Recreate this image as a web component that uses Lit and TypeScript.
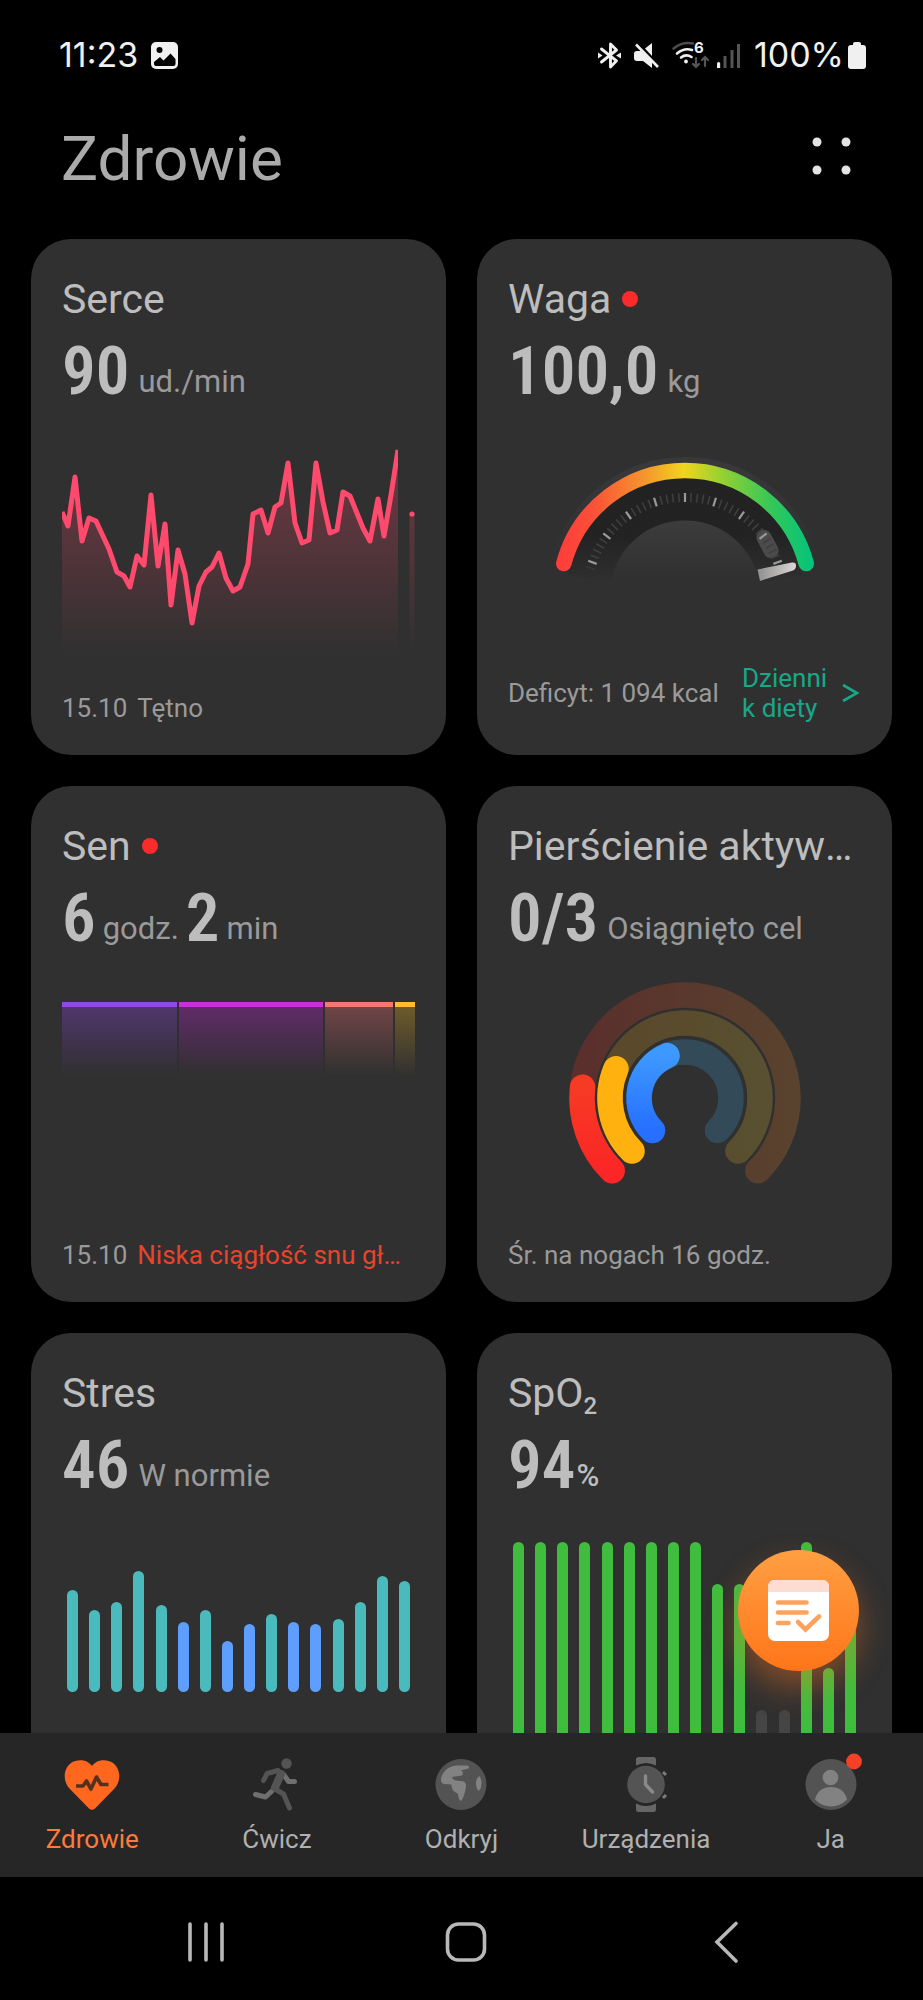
import { LitElement, html, css, svg } from "lit";
import { customElement, property } from "lit/decorators.js";

/** Point on a circle; the angle is in degrees, clockwise from the top. */
function polar(cx: number, cy: number, r: number, deg: number): string {
  const a = (deg * Math.PI) / 180;
  return `${(cx + r * Math.sin(a)).toFixed(2)} ${(cy - r * Math.cos(a)).toFixed(2)}`;
}

function arc(cx: number, cy: number, r: number, from: number, to: number): string {
  const large = to - from > 180 ? 1 : 0;
  return `M${polar(cx, cy, r, from)}A${r} ${r} 0 ${large} 1 ${polar(cx, cy, r, to)}`;
}

@customElement("health-card")
class HealthCard extends LitElement {
  @property() heading = "";
  @property({ type: Boolean }) alert = false;

  static styles = css`
    :host {
      display: flex;
      flex-direction: column;
      box-sizing: border-box;
      min-width: 0;
      min-height: 516px;
      padding: 36px 31px 32px;
      border-radius: 40px;
      background: #303030;
      color: #bdbdbd;
    }
    .title {
      display: flex;
      align-items: center;
      gap: 11px;
      margin: 0 0 12px;
      font-size: 41px;
      line-height: 48px;
      font-weight: 400;
    }
    .label {
      min-width: 0;
      overflow: hidden;
      white-space: nowrap;
      text-overflow: ellipsis;
    }
    .dot {
      flex: none;
      width: 16px;
      height: 16px;
      border-radius: 50%;
      background: #fb2b2b;
    }
    .chart {
      flex: 1;
    }
    .foot {
      display: flex;
      align-items: center;
      color: #9a9a9a;
      font-size: 26px;
      line-height: 30px;
    }
  `;

  render() {
    return html`
      <h2 class="title">
        <span class="label"><slot name="title">${this.heading}</slot></span>
        ${this.alert ? html`<span class="dot"></span>` : ""}
      </h2>
      <slot name="value"></slot>
      <div class="chart"><slot></slot></div>
      <div class="foot"><slot name="foot"></slot></div>
    `;
  }
}

@customElement("bar-chart")
class BarChart extends LitElement {
  @property({ attribute: false }) bars: { h: number; c: string }[] = [];

  static styles = css`
    :host {
      display: flex;
      justify-content: space-between;
      align-items: flex-end;
      padding: 0 5px;
    }
    .bar {
      width: 11px;
      border-radius: 6px;
    }
    .teal {
      background: #4bbabd;
    }
    .blue {
      background: #5e9eff;
    }
    .green {
      background: #40bd3f;
    }
    .grey {
      background: #454545;
    }
  `;

  render() {
    return this.bars.map((b) => html`<span class="bar ${b.c}" style="height:${b.h}px"></span>`);
  }
}

const heartLine =
  "0,106 6,120 13,71 20,135 27,112 34,115 47,143 55,166 62,170 68,181 75,150 82,159 89,89 96,160 103,118 109,199 116,144 123,168 130,217 137,180 144,166 150,161 157,147 164,172 171,185 178,181 186,158 191,108 199,104 206,127 213,101 219,97 226,57 233,117 240,137 247,134 254,57 261,96 268,127 275,124 281,86 288,90 301,122 308,135 316,93 322,130 329,89 336,44";

const sleep = [
  { size: 116, c: "deep" },
  { size: 144, c: "light" },
  { size: 69, c: "rem" },
  { size: 20, c: "awake" },
];

const stress = [102, 82, 90, 121, 87, 70, 82, 51, 68, 78, 70, 68, 73, 90, 116, 111].map((h) => ({
  h,
  c: h > 70 ? "teal" : "blue",
}));

const oxygen = [210, 210, 210, 210, 210, 210, 210, 210, 210, 168, 168, 42, 42, 210, 84, 126].map((h) => ({
  h,
  c: h > 42 ? "green" : "grey",
}));

const gaugeTicks = Array.from({ length: 43 }, (_, i) => i - 21);

const rings = [
  { r: 103, end: -84, track: "url(#track-red)", fill: "url(#ring-red)" },
  { r: 75, end: -67, track: "url(#track-amber)", fill: "#ffb20f" },
  { r: 46, end: -23, track: "#334a59", fill: "url(#ring-blue)" },
];

const tabs = [
  {
    name: "Zdrowie",
    active: true,
    icon: svg`<path fill="#ff671f" d="M30 11C25 4 15 4 9 8C1 14 1 26 7 33L27 53.500Q30 56 33 53.500L53 33C59 26 59 14 51 8C45 4 35 4 30 11z"/>
      <path fill="none" stroke="#54301f" stroke-width="3.600" stroke-linejoin="round" d="M14 31H21L24.500 26L29 34L34.500 22L39 29.500H46.500"/>`,
  },
  {
    name: "Ćwicz",
    icon: svg`<g fill="none" stroke-linecap="round" stroke-linejoin="round">
      <path stroke="#6f6f6f" stroke-width="5" d="M37 20L41.500 26.500H47.500M25 36L18.500 42L8.500 39.500"/>
      <path stroke="#545454" stroke-width="5" d="M16.500 25.500L20 18.500L31 15.500M28 34L36.500 39L42.500 53"/>
      <path stroke="#545454" stroke-width="8" d="M34 19L28 32.500"/></g>
      <circle cx="39.500" cy="8.500" r="5.200" fill="#545454"/>`,
  },
  {
    name: "Odkryj",
    icon: svg`<circle cx="30" cy="29.500" r="25.500" fill="#535353"/>
      <path fill="#828282" d="M10 25Q10 20 14 16Q18 11 26 10.500H36Q39 11 37.500 13.500L30 15.500Q33 17 31 20.500L21 22Q22 25 25 25.500L33 26.500Q35.500 28 35 32L34 37Q32 44 30 46Q27.500 45 27 39L22.500 36Q20 32 20.500 29.500L13 29Q10 28 10 25z"/>
      <path fill="#828282" d="M48.500 21Q44.500 24 45 29Q45 34 48 36Q50.500 33 50.500 28.500Q50.500 24 48.500 21z"/>`,
  },
  {
    name: "Urządzenia",
    icon: svg`<path fill="#666" d="M20 10.500V4.500Q20 2 22.500 2H37.500Q40 2 40 4.500V10.500Q30 5.500 20 10.500zM20 48.500V54Q20 57 22.500 57H37.500Q40 57 40 54V48.500Q30 53.500 20 48.500z"/>
      <circle cx="30" cy="29.500" r="18.800" fill="#545454"/>
      <path fill="none" stroke="#8a8a8a" stroke-width="3.400" stroke-linecap="round" stroke-linejoin="round" d="M29.500 21V29.500L36.500 37"/>
      <path stroke="#7a7a7a" stroke-width="3" d="M47 17L50 20M47 43L50 40"/>`,
  },
  {
    name: "Ja",
    icon: svg`<circle cx="30" cy="29.500" r="25.500" fill="#535353"/>
      <circle cx="29.500" cy="22.500" r="7.800" fill="#828282"/>
      <path fill="#828282" d="M14 44.500C16 36 22 32 30 32S44 36 46 44.500Q39 51.500 30 51.500T14 44.500z"/>
      <circle cx="53" cy="6.500" r="7.900" fill="#f24125"/>`,
  },
];

@customElement("app-root")
class AppRoot extends LitElement {
  static styles = css`
    :host {
      display: flex;
      flex-direction: column;
      height: 100vh;
      overflow: hidden;
      background: #000;
      color: #bdbdbd;
      font-family: Roboto, "Noto Sans", sans-serif;
    }
    svg {
      display: block;
      flex: none;
      overflow: visible;
    }
    button {
      padding: 0;
      border: 0;
      background: none;
      color: inherit;
      font: inherit;
      cursor: pointer;
    }
    .status {
      display: flex;
      align-items: center;
      justify-content: space-between;
      height: 110px;
      padding: 0 57px 0 59px;
      flex: none;
      color: #f0f0f0;
      font-family: Inter, Roboto, sans-serif;
      font-size: 34px;
      line-height: 40px;
    }
    .group {
      display: flex;
      align-items: center;
      gap: 13px;
    }
    .net,
    .power {
      display: flex;
      align-items: center;
    }
    .net {
      gap: 9px;
    }
    .power {
      gap: 4px;
    }
    .header {
      display: flex;
      align-items: center;
      justify-content: space-between;
      flex: none;
      padding: 13px 66px 44px 61px;
    }
    .header h1 {
      margin: 0;
      font-size: 62px;
      line-height: 72px;
      font-weight: 400;
      color: #ababab;
    }
    .body {
      position: relative;
      display: flex;
      flex: 1;
      min-height: 0;
    }
    .scroll {
      flex: 1;
      min-width: 0;
      overflow-y: auto;
      scrollbar-width: none;
    }
    .grid {
      display: grid;
      grid-template-columns: repeat(2, minmax(0, 1fr));
      gap: 31px;
      padding: 0 31px 31px;
    }
    .value {
      display: flex;
      align-items: flex-end;
      gap: 9px;
      height: 72px;
      white-space: nowrap;
    }
    .value.duration {
      gap: 7px;
    }
    .value.tight {
      gap: 1px;
    }
    .num {
      font-family: "Roboto Condensed", "Liberation Sans Narrow", Roboto, sans-serif;
      font-size: 67px;
      line-height: 72px;
      font-weight: 600;
    }
    .unit {
      margin-bottom: 7px;
      color: #9a9a9a;
      font-size: 31px;
      line-height: 36px;
    }
    .percent {
      color: #bdbdbd;
      font-weight: 500;
    }
    sub {
      font-size: 24px;
      line-height: 0;
      font-weight: 500;
      vertical-align: -7px;
    }
    .plot {
      width: 100%;
      height: auto;
    }
    .sleep {
      display: flex;
      gap: 2px;
      height: 74px;
      margin-top: 48px;
    }
    .stage {
      flex-basis: 0;
      border-top: 5px solid;
    }
    .deep {
      border-color: #9148e6;
      background: linear-gradient(#50366b, #303030);
    }
    .light {
      border-color: #c930d9;
      background: linear-gradient(#602b68, #303030);
    }
    .rem {
      border-color: #f77673;
      background: linear-gradient(#704546, #303030);
    }
    .awake {
      border-color: #fbbf2b;
      background: linear-gradient(#6e5b2b, #303030);
    }
    .stress {
      margin-top: 70px;
    }
    .oxygen {
      margin-top: 41px;
    }
    .foot {
      display: flex;
      flex: 1;
      align-items: center;
      justify-content: space-between;
      min-width: 0;
      white-space: nowrap;
    }
    .foot.dated {
      justify-content: flex-start;
      gap: 10px;
    }
    .warn {
      min-width: 0;
      margin-right: 8px;
      overflow: hidden;
      text-overflow: ellipsis;
      color: #e9432c;
    }
    .diary {
      display: flex;
      align-items: center;
      gap: 11px;
      color: #16a888;
      text-decoration: none;
    }
    .diary span {
      width: 88px;
      white-space: normal;
      word-break: break-all;
    }
    .fab {
      position: absolute;
      right: 64px;
      bottom: 62px;
      display: flex;
      align-items: center;
      justify-content: center;
      width: 121px;
      height: 121px;
      border-radius: 50%;
      background: linear-gradient(#ff9f43, #ff7519);
      box-shadow: 0 16px 32px rgba(255, 120, 30, 0.4);
    }
    .tabs {
      display: grid;
      grid-template-columns: repeat(5, 1fr);
      flex: none;
      padding: 22px 0;
      background: #262626;
    }
    .tab {
      display: flex;
      flex-direction: column;
      align-items: center;
      gap: 8px;
      color: #b0b0b0;
      font-size: 26px;
      line-height: 32px;
      text-decoration: none;
    }
    .tab.active {
      color: #ff7a3c;
    }
    .system {
      display: flex;
      align-items: center;
      justify-content: center;
      flex: none;
      height: 123px;
      padding: 6px 0 0 8px;
      box-sizing: border-box;
    }
    .system button {
      display: flex;
      justify-content: center;
      width: 260px;
    }
  `;

  private heartPlot() {
    return html`<svg class="plot" viewBox="0 1 353 252" role="img" aria-label="Tętno">
      <defs>
        <linearGradient id="pulse" gradientUnits="userSpaceOnUse" x1="0" y1="60" x2="0" y2="248">
          <stop offset="0" stop-color="#ff4a6e" stop-opacity=".28" />
          <stop offset=".45" stop-color="#ff4a6e" stop-opacity=".17" />
          <stop offset="1" stop-color="#ff4a6e" stop-opacity="0" />
        </linearGradient>
        <clipPath id="span"><path d="M0 0H336V252H0z" /></clipPath>
      </defs>
      <g clip-path="url(#span)">
        <polygon points="0,250 ${heartLine} 336,250" fill="url(#pulse)" />
        <polyline points=${heartLine} fill="none" stroke="#ff4a6e" stroke-width="5" stroke-linejoin="round" />
      </g>
      <path d="M347.500 108H352.500V250H347.500z" fill="url(#pulse)" />
      <circle cx="350" cy="108" r="2.600" fill="#ff4a6e" />
    </svg>`;
  }

  private gauge() {
    const cx = 177;
    const cy = 190;
    return html`<svg class="plot" viewBox="0 1 353 220" role="img" aria-label="Waga">
      <defs>
        <linearGradient id="scale" gradientUnits="userSpaceOnUse" x1="48" y1="0" x2="304" y2="0">
          <stop offset="0" stop-color="#ff3b3b" />
          <stop offset=".14" stop-color="#fb4f38" />
          <stop offset=".36" stop-color="#f59a2c" />
          <stop offset=".5" stop-color="#f0d51e" />
          <stop offset=".66" stop-color="#8fd034" />
          <stop offset=".84" stop-color="#34c759" />
          <stop offset="1" stop-color="#04c47b" />
        </linearGradient>
        <linearGradient id="band" gradientUnits="userSpaceOnUse" x1="0" y1="60" x2="0" y2="178">
          <stop offset="0" stop-color="#222" />
          <stop offset=".6" stop-color="#222" stop-opacity=".95" />
          <stop offset="1" stop-color="#222" stop-opacity="0" />
        </linearGradient>
        <linearGradient id="rim" gradientUnits="userSpaceOnUse" x1="0" y1="50" x2="0" y2="150">
          <stop offset="0" stop-color="#39393c" />
          <stop offset="1" stop-color="#303030" />
        </linearGradient>
        <linearGradient id="dome" gradientUnits="userSpaceOnUse" x1="0" y1="115" x2="0" y2="172">
          <stop offset="0" stop-color="#3c3c3c" />
          <stop offset="1" stop-color="#303030" />
        </linearGradient>
        <linearGradient id="needle" x1="0" y1="0" x2="1" y2="0">
          <stop offset="0" stop-color="#8f8f8f" />
          <stop offset="1" stop-color="#ddd6d6" />
        </linearGradient>
      </defs>
      <path d=${arc(cx, cy, 130, -75, 75)} fill="none" stroke="url(#rim)" stroke-width="18" />
      <path d=${arc(cx, cy, 97, -80, 80)} fill="none" stroke="url(#band)" stroke-width="44" />
      <path d="${arc(cx, cy, 75.5, -76, 76)}z" fill="url(#dome)" />
      <path d=${arc(cx, cy, 125.5, -75, 75)} fill="none" stroke="url(#scale)" stroke-width="15.500" stroke-linecap="round" />
      <rect x="252" y="123" width="15" height="30" rx="7.500" fill="#4b4b4b" transform="rotate(-28 259.500 138)" />
      ${gaugeTicks.map((t) => {
        const major = t % 5 === 0;
        const a = t * 3.5;
        return svg`<path d="M${polar(cx, cy, 94, a)}L${polar(cx, cy, 103, a)}"
          stroke=${major ? "#9a9a9a" : "#3f3f3f"} stroke-width=${major ? 2.2 : 1.6}
          opacity=${Math.abs(t) > 20 ? 0.6 : 1} />`;
      })}
      <path d="M249.500 163.500L284 156.500Q288 156 288 159.500Q288 163 285 164.500L252 175z" fill="url(#needle)" />
    </svg>`;
  }

  private ringPlot() {
    const cx = 177;
    const cy = 145;
    return html`<svg class="plot" viewBox="0 1 353 250" role="img" aria-label="Pierścienie aktywności">
      <defs>
        <linearGradient id="track-red" x1="0" y1="0" x2="1" y2="0">
          <stop offset="0" stop-color="#5a2f2c" />
          <stop offset="1" stop-color="#59422e" />
        </linearGradient>
        <linearGradient id="track-amber" x1="0" y1="0" x2="1" y2="0">
          <stop offset="0" stop-color="#5a482a" />
          <stop offset="1" stop-color="#585030" />
        </linearGradient>
        <linearGradient id="ring-red" x1="0" y1="0" x2="0" y2="1">
          <stop offset="0" stop-color="#f63a24" />
          <stop offset="1" stop-color="#fb2626" />
        </linearGradient>
        <linearGradient id="ring-blue" x1="0" y1="0" x2="0" y2="1">
          <stop offset="0" stop-color="#3d98ff" />
          <stop offset="1" stop-color="#266fff" />
        </linearGradient>
      </defs>
      <g fill="none" stroke-width="25.500" stroke-linecap="round">
        ${rings.map(
          (g) => svg`<path d=${arc(cx, cy, g.r, -135, 135)} stroke=${g.track} />
          <path d=${arc(cx, cy, g.r, -135, g.end)} stroke=${g.fill} />`
        )}
      </g>
    </svg>`;
  }

  private statusBar() {
    return html`<div class="status">
      <div class="group">
        <span>11:23</span>
        <svg width="27" height="27" viewBox="0 0 27 27">
          <rect width="27" height="27" rx="5" fill="#f0f0f0" />
          <circle cx="8.500" cy="8" r="3" fill="#000" />
          <path d="M3 20L9 15L12.500 18.500L19.500 11.500L24.500 17V22Q24.500 24 22.500 24H5Q3 24 3 22z" fill="#000" />
        </svg>
      </div>
      <div class="group">
        <svg width="23" height="27" viewBox="0 0 23 27">
          <path d="M3.500 7L18.500 18.800L12.500 25V2L18.500 8L3.500 20" fill="none" stroke="#f0f0f0" stroke-width="2.900" stroke-linejoin="round" stroke-linecap="round" />
          <path d="M0 10.500L4.500 13.500L0 16.500zM23 10.500L18 13.500L23 16.500z" fill="#f0f0f0" />
        </svg>
        <svg width="25" height="27" viewBox="0 0 25 27">
          <path d="M0 12Q0 9 3 9H7L18 20V26L9 19H3Q0 19 0 16zM18 1V14L11 6.500z" fill="#f0f0f0" />
          <path d="M2 2.500L24 25" stroke="#f0f0f0" stroke-width="2.600" />
        </svg>
        <div class="net">
          <svg width="36" height="28" viewBox="0 0 36 28">
            <g fill="none" stroke-width="2.600" stroke-linecap="round">
              <path d="M1.500 7.500Q10 .500 21 2.500" stroke="#4c4c4c" />
              <path d="M5 12.500Q12 6.500 20 9" stroke="#f0f0f0" />
              <path d="M9 16.500Q14 12.500 19.500 16" stroke="#f0f0f0" />
              <path d="M24 17V26M21 23L24 26L27 23M33 25V16M30 19L33 16L36 19" stroke="#555" stroke-width="2.200" />
            </g>
            <circle cx="14" cy="20.500" r="1.900" fill="#f0f0f0" />
            <text x="22" y="12" font-size="15" font-weight="700" fill="#f0f0f0">6</text>
          </svg>
          <svg width="24" height="27" viewBox="0 0 24 27">
            <path d="M0 21.500Q0 20 1.600 20T3.200 21.500V26H0z" fill="#f0f0f0" />
            <path d="M6.500 14H9.500V26H6.500zM13.500 8H16.500V26H13.500zM20 2H23V26H20z" fill="#555" />
          </svg>
        </div>
        <div class="power">
          <span>100%</span>
          <svg width="18" height="27" viewBox="0 0 18 27">
            <path d="M5 3V2Q5 0 7 0H11Q13 0 13 2V3H15Q18 3 18 6V24Q18 27 15 27H3Q0 27 0 24V6Q0 3 3 3z" fill="#f0f0f0" />
          </svg>
        </div>
      </div>
    </div>`;
  }

  render() {
    return html`
      ${this.statusBar()}
      <header class="header">
        <h1>Zdrowie</h1>
        <button aria-label="Więcej">
          <svg width="48" height="48" viewBox="0 0 48 48" fill="#e4e4e4">
            <circle cx="8" cy="7" r="4.500" /><circle cx="37" cy="7" r="4.500" />
            <circle cx="8" cy="35" r="4.500" /><circle cx="37" cy="35" r="4.500" />
          </svg>
        </button>
      </header>

      <div class="body">
        <main class="scroll">
          <div class="grid">
            <health-card heading="Serce">
              <div slot="value" class="value"><span class="num">90</span><span class="unit">ud./min</span></div>
              ${this.heartPlot()}
              <div slot="foot" class="foot dated"><span>15.10</span><span>Tętno</span></div>
            </health-card>

            <health-card heading="Waga" alert>
              <div slot="value" class="value"><span class="num">100,0</span><span class="unit">kg</span></div>
              ${this.gauge()}
              <div slot="foot" class="foot">
                <span>Deficyt: 1 094 kcal</span>
                <a class="diary" href="#dieta">
                  <span>Dziennik diety</span>
                  <svg width="20" height="20" viewBox="0 0 20 20">
                    <path d="M2 2L16 10L2 18" fill="none" stroke="#16a888" stroke-width="2.600" />
                  </svg>
                </a>
              </div>
            </health-card>

            <health-card heading="Sen" alert>
              <div slot="value" class="value duration">
                <span class="num">6</span><span class="unit">godz.</span>
                <span class="num">2</span><span class="unit">min</span>
              </div>
              <div class="sleep">
                ${sleep.map((s) => html`<span class="stage ${s.c}" style="flex-grow:${s.size}"></span>`)}
              </div>
              <div slot="foot" class="foot dated">
                <span>15.10</span><span class="warn">Niska ciągłość snu głębokiego</span>
              </div>
            </health-card>

            <health-card heading="Pierścienie aktywności">
              <div slot="value" class="value"><span class="num">0/3</span><span class="unit">Osiągnięto cel</span></div>
              ${this.ringPlot()}
              <div slot="foot" class="foot"><span>Śr. na nogach 16 godz.</span></div>
            </health-card>

            <health-card heading="Stres">
              <div slot="value" class="value"><span class="num">46</span><span class="unit">W normie</span></div>
              <bar-chart class="stress" .bars=${stress}></bar-chart>
            </health-card>

            <health-card>
              <span slot="title">SpO<sub>2</sub></span>
              <div slot="value" class="value tight"><span class="num">94</span><span class="unit percent">%</span></div>
              <bar-chart class="oxygen" .bars=${oxygen}></bar-chart>
            </health-card>
          </div>
        </main>
        <button class="fab" aria-label="Plan dnia">
          <svg width="61" height="61" viewBox="0 0 61 61">
            <rect width="61" height="61" rx="7" fill="#fff" />
            <path d="M0 12V7Q0 0 7 0H54Q61 0 61 7V12z" fill="#fddcd2" />
            <path d="M10 22.500H38.500M10 32.500H38.500M10 43H20.500M30 42L37.500 49.500L51 36.500" fill="none" stroke="#ffa25e" stroke-width="4.600" stroke-linecap="round" />
          </svg>
        </button>
      </div>

      <nav class="tabs">
        ${tabs.map(
          (t) => html`<a class="tab ${t.active ? "active" : ""}" href="#${t.name}">
            <svg width="60" height="60" viewBox="0 0 60 60">${t.icon}</svg>
            <span>${t.name}</span>
          </a>`
        )}
      </nav>

      <div class="system">
        <button aria-label="Ostatnie">
          <svg width="42" height="42" viewBox="0 0 42 42">
            <path d="M5 3V39M21 3V39M37 3V39" stroke="#b8b8b8" stroke-width="3.600" stroke-linecap="round" />
          </svg>
        </button>
        <button aria-label="Ekran główny">
          <svg width="42" height="42" viewBox="0 0 42 42">
            <rect x="2.500" y="3" width="37" height="36" rx="11" fill="none" stroke="#b8b8b8" stroke-width="3.600" />
          </svg>
        </button>
        <button aria-label="Wstecz">
          <svg width="42" height="42" viewBox="0 0 42 42">
            <path d="M31 2.500L12 21L31 40" fill="none" stroke="#b8b8b8" stroke-width="3.600" stroke-linecap="round" />
          </svg>
        </button>
      </div>
    `;
  }
}
